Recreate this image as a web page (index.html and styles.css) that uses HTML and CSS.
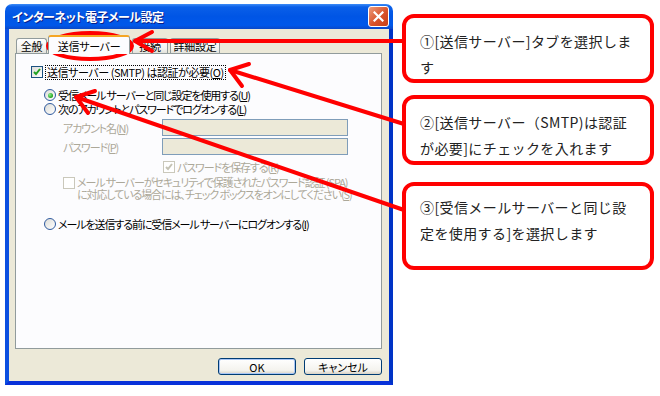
FILE: index.html
```html
<!DOCTYPE html>
<html lang="ja">
<head>
    <meta charset="UTF-8">
    <meta name="viewport" content="width=device-width, initial-scale=1.0">
    <title>インターネット電子メール設定 - 送信サーバー</title>
    <link rel="stylesheet" href="styles.css">
</head>
<body>
    <div class="page">
        <!-- Dialog window -->
        <div class="window">
            <div class="titlebar">
                <span class="title">インターネット電子メール設定</span>
                <span class="close">
                    <svg width="11" height="11" viewBox="0 0 11 11"><path d="M1.5 1.5L9.5 9.5M9.5 1.5L1.5 9.5" stroke="#fff" stroke-width="2.2" stroke-linecap="square"/></svg>
                </span>
            </div>
            <div class="frame">
                <div class="tabs">
                    <div class="tab t-general">全般</div>
                    <div class="tab active">送信サーバー</div>
                    <div class="tab t-conn">接続</div>
                    <div class="tab t-adv">詳細設定</div>
                </div>
                <div class="panel">
                    <div class="row main-row">
                        <span class="box">
                            <svg width="8" height="8" viewBox="0 0 8 8"><path d="M1 4l2 2 4-5" fill="none" stroke="#21a121" stroke-width="2"/></svg>
                        </span>
                        <span class="focus">送信サーバー (SMTP) は認証が必要(<u>O</u>)</span>
                    </div>
                    <div class="row radio-row r1"><span class="radio on"></span>受信メール サーバーと同じ設定を使用する(<u>U</u>)</div>
                    <div class="row radio-row"><span class="radio"></span>次のアカウントとパスワードでログオンする(<u>L</u>)</div>
                    <div class="field f1"><span class="flabel">アカウント名(<u>N</u>)</span><span class="input"></span></div>
                    <div class="field f2"><span class="flabel">パスワード(<u>P</u>)</span><span class="input"></span></div>
                    <div class="row save-row muted">
                        <span class="box dis">
                            <svg width="8" height="8" viewBox="0 0 8 8"><path d="M1 4l2 2 4-5" fill="none" stroke="#c4c2b4" stroke-width="2"/></svg>
                        </span>
                        パスワードを保存する(<u>R</u>)
                    </div>
                    <div class="row spa-row muted">
                        <span class="box dis"></span>
                        <span>メール サーバーがセキュリティで保護されたパスワード認証 (SPA)<br>に対応している場合には、チェック ボックスをオンにしてください(<u>S</u>)</span>
                    </div>
                    <div class="row radio-row r3"><span class="radio"></span>メールを送信する前に受信メール サーバーにログオンする(<u>I</u>)</div>
                </div>
                <div class="buttons">
                    <button class="btn default">OK</button>
                    <button class="btn">キャンセル</button>
                </div>
            </div>
        </div>

        <!-- Step callouts -->
        <div class="notes">
            <div class="note n1">①[送信サーバー]タブを選択しま<br>す</div>
            <div class="note n2">②[送信サーバー（SMTP)は認証<br>が必要]にチェックを入れます</div>
            <div class="note n3">③[受信メールサーバーと同じ設<br>定を使用する]を選択します</div>
        </div>

        <!-- Red marks drawn over the dialog -->
        <svg class="marks" width="660" height="396" viewBox="0 0 660 396">
            <g fill="none" stroke="#ff0000" stroke-width="4" stroke-linecap="round" stroke-linejoin="round">
                <ellipse cx="90" cy="46" rx="42" ry="13"/>
                <path d="M135 41H404"/>
                <path d="M152 32L135 41L152 51"/>
                <path d="M230 70L404 124"/>
                <path d="M249 64L230 70L242 86"/>
                <path d="M76 97L404 210"/>
                <path d="M95 91L76 97L88 113"/>
            </g>
        </svg>
    </div>
</body>
</html>
```

FILE: styles.css
```css
body {
    margin: 0;
    background-color: #fff;
    font-family: "Noto Sans CJK JP", "Noto Sans", sans-serif;
}
.page {
    position: relative;
    width: 660px;
    height: 396px;
    display: flex;
    align-items: flex-start;
}

/* window */
.window {
    width: 388px;
    margin: 4px 0 0 5px;
    font-size: 11px;
    font-feature-settings: "palt";
    letter-spacing: -1.1px;
    color: #000;
}
.titlebar {
    height: 25px;
    display: flex;
    align-items: center;
    justify-content: space-between;
    padding: 0 4px 0 7px;
    border-radius: 7px 7px 0 0;
    background: linear-gradient(#3d8cf7 0%, #0a5fe8 12%, #0055e5 50%, #0058ea 85%, #0a48c8 100%);
}
.title {
    color: #fff;
    font-size: 12px;
    font-weight: bold;
    letter-spacing: -0.5px;
    text-shadow: 1px 1px #0a1f8a;
}
.close {
    width: 19px;
    height: 19px;
    display: flex;
    align-items: center;
    justify-content: center;
    border: 1px solid #fff;
    border-radius: 3px;
    background: linear-gradient(135deg, #ec9b7c, #d9532a 55%, #c63f18);
}
.frame {
    background-color: #ece9d8;
    border: 4px solid #0b4fe0;
    border-top: none;
    border-right-color: #0033c6;
    border-bottom-color: #0831d9;
    padding: 6px 7px 6px 6px;
}

/* tabs */
.tabs {
    height: 18px;
    display: flex;
    align-items: flex-end;
    padding-left: 1px;
    letter-spacing: -0.3px;
}
.tab {
    height: 15px;
    line-height: 15px;
    text-align: center;
    border: 1px solid #919b9c;
    border-bottom: none;
    border-radius: 3px 3px 0 0;
    background: linear-gradient(#fff, #f3f3ef 70%, #e2e1da);
    box-sizing: border-box;
    margin-right: 1px;
}
.t-general { width: 31px; }
.t-conn { width: 36px; margin-left: 1px; }
.t-adv { width: 50px; margin-left: 1px; }
.tab.active {
    width: 82px;
    height: 19px;
    line-height: 18px;
    margin-bottom: -1px;
    background: #fcfcfe;
    border-top: 2px solid #f5a623;
    z-index: 1;
}
.panel {
    height: 296px;
    box-sizing: border-box;
    border: 1px solid #919b9c;
    background-color: #fcfcfe;
    padding: 10px 0 0 15px;
}

/* rows */
.row {
    display: flex;
    align-items: center;
    white-space: nowrap;
    line-height: 14px;
}
.main-row { height: 16px; }
.focus {
    margin-left: 2px;
    padding: 0 1px;
    line-height: 13px;
    letter-spacing: -0.45px;
    border: 1px dotted #000;
}
.box {
    width: 12px;
    height: 12px;
    box-sizing: border-box;
    flex-shrink: 0;
    display: flex;
    align-items: center;
    justify-content: center;
    border: 1px solid #1c5180;
    background: linear-gradient(135deg, #dcdcd7, #fff);
}
.box.dis {
    border-color: #cac8bb;
    background: #fff;
}
.radio-row {
    height: 14px;
    margin-left: 13px;
}
.r1 { margin-top: 8px; }
.r3 { margin-top: 17px; }
.radio {
    width: 12px;
    height: 12px;
    box-sizing: border-box;
    margin-right: 2px;
    border: 1px solid #2f5a9e;
    border-radius: 50%;
    background: linear-gradient(135deg, #dcdcd7, #fff);
    display: flex;
    align-items: center;
    justify-content: center;
}
.radio.on::after {
    content: "";
    width: 5px;
    height: 5px;
    border-radius: 50%;
    background: radial-gradient(circle at 35% 35%, #8ef08e, #21a121 70%);
}
.field {
    display: flex;
    align-items: center;
    margin-left: 32px;
    color: #aca899;
}
.f1 { margin-top: 3px; }
.f2 { margin-top: 2px; }
.flabel { width: 99px; }
.input {
    width: 186px;
    height: 17px;
    box-sizing: border-box;
    border: 1px solid #7f9db9;
    background-color: #ece9d8;
}
.muted { color: #aca899; }
.save-row {
    height: 14px;
    margin: 5px 0 0 132px;
}
.save-row .box { margin-right: 2px; }
.spa-row {
    align-items: flex-start;
    margin: 2px 0 0 32px;
    line-height: 12px;
}
.spa-row .box { margin: 1px 2px 0 0; }

/* buttons */
.buttons {
    display: flex;
    justify-content: flex-end;
    gap: 8px;
    margin-top: 9px;
}
.btn {
    width: 78px;
    height: 17px;
    padding: 0;
    font-family: inherit;
    font-size: 11px;
    color: #000;
    border: 1px solid #003c74;
    border-radius: 3px;
    background: linear-gradient(#fff, #f4f3ee 75%, #d8d2c6);
    font-feature-settings: "palt";
}
.btn.default {
    box-shadow: inset 0 0 0 1px #a9c6f5;
}

/* callouts */
.notes {
    width: 252px;
    margin: 14px 0 0 9px;
    display: flex;
    flex-direction: column;
}
.note {
    box-sizing: border-box;
    border: 4px solid #ff0000;
    border-radius: 12px;
    background-color: #fff;
    padding: 10px 0 0 14px;
    font-size: 14px;
    line-height: 26px;
    letter-spacing: 0.4px;
    color: #222;
    white-space: nowrap;
}
.n1 { height: 69px; }
.n2 { height: 70px; margin-top: 12px; }
.n3 { height: 88px; margin-top: 17px; padding-top: 8px; }

.marks {
    position: absolute;
    left: 0;
    top: 0;
    pointer-events: none;
}
```
